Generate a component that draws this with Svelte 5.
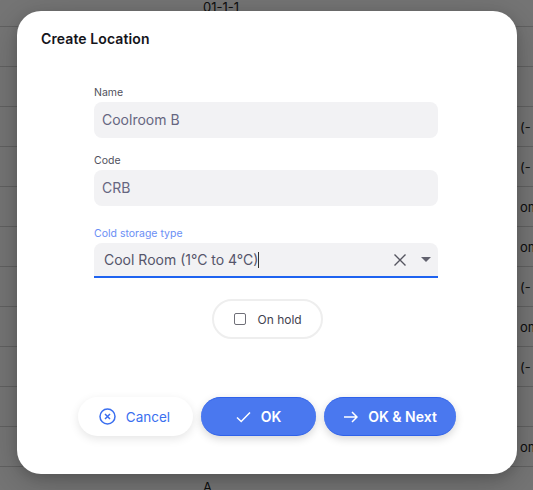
<script>
	let rows = [
		{ code: "01-1-1", type: "" },
		{ code: "", type: "" },
		{ code: "", type: "" },
		{ code: "", type: "(-" },
		{ code: "", type: "(-" },
		{ code: "", type: "om" },
		{ code: "", type: "om" },
		{ code: "", type: "(-" },
		{ code: "", type: "om" },
		{ code: "", type: "(-" },
		{ code: "", type: "" },
		{ code: "", type: "om" },
		{ code: "A", type: "" }
	]
</script>

<div class="page">
	<div class="table">
		{#each rows as row}
			<div class="row">
				<span class="code">{row.code}</span>
				<span class="type">{row.type}</span>
			</div>
		{/each}
	</div>

	<div class="backdrop"></div>

	<div class="dialog">
		<h2>Create Location</h2>

		<form>
			<label class="field">
				<span class="label">Name</span>
				<span class="input">Coolroom B</span>
			</label>

			<label class="field last">
				<span class="label">Code</span>
				<span class="input">CRB</span>
			</label>

			<div class="field">
				<span class="label active">Cold storage type</span>
				<div class="select">
					<span class="value">Cool Room (1°C to 4°C)</span>
					<span class="caret"></span>
					<svg class="clear" width="12" height="12" viewBox="0 0 12 12">
						<path d="M0.5 0.5 L11.5 11.5 M11.5 0.5 L0.5 11.5" />
					</svg>
					<span class="arrow"></span>
				</div>
			</div>

			<div class="hold-row">
				<div class="hold">
					<span class="box"></span>
					<span>On hold</span>
				</div>
			</div>
		</form>

		<div class="actions">
			<button class="btn cancel" type="button">
				<svg width="17" height="17" viewBox="0 0 17 17">
					<circle cx="8.5" cy="8.5" r="7.5" />
					<path d="M6 6 L11 11 M11 6 L6 11" />
				</svg>
				Cancel
			</button>
			<button class="btn primary ok" type="button">
				<svg width="15" height="12" viewBox="0 0 15 12">
					<path d="M1 6.5 L5.2 10.5 L14 1.5" />
				</svg>
				OK
			</button>
			<button class="btn primary next" type="button">
				<svg width="15" height="12" viewBox="0 0 15 12">
					<path d="M1 6 H14 M9 1 L14 6 L9 11" />
				</svg>
				OK &amp; Next
			</button>
		</div>
	</div>
</div>

<style>
	:global(body) {
		margin: 0;
	}

	.page {
		position: relative;
		width: 533px;
		height: 490px;
		overflow: hidden;
		font-family: Inter, "Liberation Sans", sans-serif;
		background: #fff;
	}

	.table {
		margin-top: -13px;
	}
	.row {
		box-sizing: border-box;
		height: 40px;
		display: flex;
		align-items: center;
		border-bottom: 1px solid #d4d4d4;
		font-size: 13px;
		color: #222;
	}
	.code {
		width: 522px;
		padding-left: 203px;
		box-sizing: border-box;
		flex-shrink: 0;
	}
	.type {
		white-space: nowrap;
		margin-left: -2px;
	}

	.backdrop {
		position: absolute;
		inset: 0;
		background: rgba(0, 0, 0, 0.54);
	}

	.dialog {
		position: absolute;
		left: 17px;
		top: 11px;
		width: 500px;
		height: 463px;
		box-sizing: border-box;
		background: #fff;
		border-radius: 24px;
		box-shadow: 0 8px 38px rgba(0, 0, 0, 0.2), 0 4px 12px rgba(0, 0, 0, 0.15);
		padding: 19px 24px 0;
	}

	h2 {
		margin: 0;
		font-size: 14px;
		line-height: 18px;
		font-weight: 600;
		color: #14141a;
		letter-spacing: 0.1px;
	}

	form {
		width: 344px;
		margin: 37px 0 0 53px;
	}

	.field {
		display: block;
		margin-bottom: 15px;
	}
	.field.last {
		margin-bottom: 20px;
	}
	.label {
		display: block;
		font-size: 10.5px;
		line-height: 16px;
		margin-bottom: 1px;
		color: #50505c;
	}
	.label.active {
		color: #6a8ef5;
	}

	.input {
		display: block;
		height: 36px;
		line-height: 36px;
		padding: 0 8px;
		background: #f2f2f4;
		border-radius: 8px;
		font-size: 14px;
		color: #666680;
	}

	.select {
		display: flex;
		align-items: center;
		height: 35px;
		box-sizing: border-box;
		padding: 0 7px 0 10px;
		background: #f2f2f4;
		border-radius: 8px 8px 0 0;
		border-bottom: 2px solid #1f63f0;
		font-size: 14px;
		color: #55556a;
	}
	.caret {
		width: 1px;
		height: 16px;
		background: #333;
	}
	.clear {
		margin-left: auto;
		fill: none;
		stroke: #55555f;
		stroke-width: 1.4;
	}
	.arrow {
		margin-left: 15px;
		width: 0;
		height: 0;
		border-left: 5px solid transparent;
		border-right: 5px solid transparent;
		border-top: 5px solid #62626e;
	}

	.hold-row {
		display: flex;
		justify-content: center;
		margin: 21px 0 0 2px;
	}
	.hold {
		display: flex;
		align-items: center;
		gap: 12px;
		box-sizing: border-box;
		width: 111px;
		height: 40px;
		padding-left: 20px;
		border: 2px solid #eeeeee;
		border-radius: 20px;
		font-size: 12px;
		color: #42424f;
	}
	.box {
		box-sizing: border-box;
		width: 12px;
		height: 12px;
		border: 1px solid #6f6f78;
		border-radius: 2px;
		flex-shrink: 0;
	}

	.actions {
		display: flex;
		gap: 8px;
		margin: 58px 0 0 37px;
	}
	.btn {
		display: flex;
		align-items: center;
		justify-content: center;
		gap: 10px;
		height: 39px;
		border: 0;
		border-radius: 20px;
		padding: 0;
		font-family: inherit;
		font-size: 14px;
		font-weight: 500;
		box-shadow: 0 3px 8px rgba(0, 0, 0, 0.16);
	}
	.btn svg {
		fill: none;
		stroke: currentColor;
		stroke-width: 1.5;
		flex-shrink: 0;
	}
	.cancel {
		width: 115px;
		padding-right: 2px;
		background: #fff;
		color: #3a6ff0;
		font-size: 13.5px;
		font-weight: 400;
		box-shadow: 0 3px 10px rgba(0, 0, 0, 0.1);
	}
	.primary {
		background: #4a78ef;
		color: #fff;
		font-weight: 600;
		border-top: 1px solid #2f62ea;
		border-bottom: 1px solid #2f62ea;
	}
	.ok {
		width: 115px;
	}
	.next {
		width: 132px;
	}
</style>
